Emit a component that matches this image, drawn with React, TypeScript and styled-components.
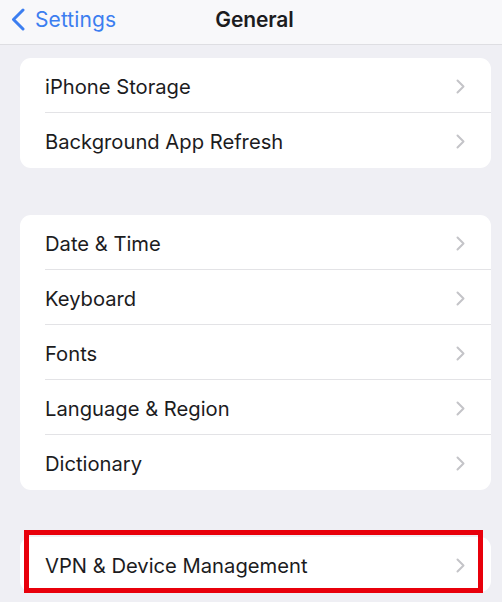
import React from "react";
import styled, { createGlobalStyle } from "styled-components";

const Global = createGlobalStyle`
  html, body {
    margin: 0;
    padding: 0;
    background: #efeff4;
    overflow: hidden;
  }
  * { box-sizing: border-box; }
`;

const Screen = styled.div`
  width: 502px;
  height: 602px;
  background: #efeff4;
  font-family: Inter, "Noto Sans", "Liberation Sans", sans-serif;
  color: #1c1c1e;
  overflow: hidden;
`;

const NavBar = styled.header`
  height: 45px;
  background: #f8f8fa;
  border-bottom: 1px solid #dedee2;
  display: grid;
  grid-template-columns: 1fr auto 1fr;
  align-items: center;
  padding: 0 0 6px 11px;
`;

const BackButton = styled.div`
  display: flex;
  align-items: center;
  gap: 10px;
  color: #3c7ef0;
  font-size: 21px;
  letter-spacing: 0.1px;
`;

const Title = styled.div`
  font-size: 21px;
  font-weight: 600;
  letter-spacing: -0.1px;
  padding-right: 4px;
`;

const Content = styled.main`
  display: flex;
  flex-direction: column;
  gap: 47px;
  padding: 13px 11px 0 20px;
`;

const Card = styled.section`
  position: relative;
  background: #ffffff;
  border-radius: 11px;
`;

const Row = styled.div`
  height: 55px;
  padding-left: 25px;
  display: flex;
`;

const RowInner = styled.div<{ $last: boolean }>`
  flex: 1;
  display: flex;
  align-items: center;
  justify-content: space-between;
  padding: 2px 26px 0 0;
  border-bottom: ${(p) => (p.$last ? "none" : "1px solid #e3e3e6")};
`;

const Label = styled.span`
  font-size: 20.2px;
  letter-spacing: 0;
`;

const Highlight = styled.div`
  position: absolute;
  left: 4px;
  right: 8px;
  top: -7px;
  height: 63px;
  border: 5px solid #e8000b;
  pointer-events: none;
`;

const Chevron = () => (
  <svg width="9" height="15" viewBox="0 0 9 15" fill="none">
    <path d="M1.5 1.5 L7.5 7.5 L1.5 13.5" stroke="#c4c4c8" strokeWidth="2" strokeLinecap="round" strokeLinejoin="round" />
  </svg>
);

const BackChevron = () => (
  <svg width="14" height="23" viewBox="0 0 14 23" fill="none">
    <path d="M12 2 L2.5 11.5 L12 21" stroke="#3c7ef0" strokeWidth="3" strokeLinecap="round" strokeLinejoin="round" />
  </svg>
);

const groups: string[][] = [
  ["iPhone Storage", "Background App Refresh"],
  ["Date & Time", "Keyboard", "Fonts", "Language & Region", "Dictionary"],
  ["VPN & Device Management"],
];

export default function App() {
  return (
    <Screen>
      <Global />
      <NavBar>
        <BackButton>
          <BackChevron />
          Settings
        </BackButton>
        <Title>General</Title>
        <div />
      </NavBar>
      <Content>
        {groups.map((items, gi) => (
          <Card key={gi}>
            {items.map((label, i) => (
              <Row key={label}>
                <RowInner $last={i === items.length - 1}>
                  <Label>{label}</Label>
                  <Chevron />
                </RowInner>
              </Row>
            ))}
            {gi === groups.length - 1 && <Highlight />}
          </Card>
        ))}
      </Content>
    </Screen>
  );
}
